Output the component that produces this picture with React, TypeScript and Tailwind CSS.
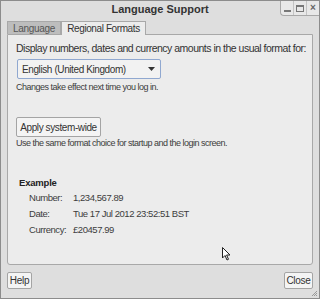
import React from 'react';

const font = { fontFamily: '"Liberation Sans", Arial, sans-serif' };

function Cursor() {
  return (
    <svg width="10" height="14" viewBox="0 0 10 14" className="absolute left-[221px] top-[246px]">
      <path d="M0.5 0.5 L0.5 11 L3 8.5 L5 13 L6.5 12.3 L4.6 8 L8 8 Z" fill="#fff" stroke="#222" strokeWidth="1" />
    </svg>
  );
}

function WindowButtons() {
  return (
    <div className="absolute right-0 top-0 flex h-[15px] border border-t-0 border-r-0 border-[#a8a8a8] rounded-bl-[4px] bg-[#e8e8e8]">
      <div className="w-[13px] flex items-end justify-center pb-[3px] border-r border-[#c4c4c4]">
        <div className="w-[7px] h-[2px] bg-[#777]" />
      </div>
      <div className="w-[13px] flex items-center justify-center border-r border-[#c4c4c4]">
        <div className="w-[8px] h-[7px] border border-[#777] border-t-2" />
      </div>
      <div className="w-[12px] flex items-center justify-center text-[10px] leading-none text-[#666] font-bold">×</div>
    </div>
  );
}

export default function App() {
  return (
    <div className="relative w-[320px] h-[299px] bg-[#dedede] border border-[#8c8c8c] text-[#3c3c3c] overflow-hidden whitespace-nowrap" style={font}>
      <div className="h-[16px] flex items-center justify-center text-[11px] font-bold text-[#333]">Language Support</div>
      <WindowButtons />
      <div className="px-[6px] pt-[3px]">
        <div className="flex items-end text-[10px] h-[14px]">
          <div className="h-[13px] w-[54px] flex items-center justify-center bg-[#bdbdbd] border border-b-0 border-[#a8a8a8] text-[#555] tracking-[-0.3px]">Language</div>
          <div className="h-[14px] w-[85px] flex items-center justify-center bg-[#ececec] border border-b-0 border-[#a8a8a8] text-[#333] -mb-px relative z-10 tracking-[-0.4px]">Regional Formats</div>
        </div>
        <div className="h-[231px] bg-[#ececec] border border-[#a8a8a8] rounded-b-[3px] px-[8px] pt-[6px]">
          <div className="text-[10.5px] leading-[14px] text-[#333] tracking-[-0.5px]">Display numbers, dates and currency amounts in the usual format for:</div>
          <div className="mt-[4px] ml-px w-[144px] h-[20px] bg-[#f2f2f2] border border-[#90a8d0] rounded-[2px] flex items-center justify-between pl-[4px] pr-[5px] text-[10px] text-[#333] tracking-[-0.4px]">
            <span>English (United Kingdom)</span>
            <svg width="7" height="4" viewBox="0 0 7 4"><path d="M0 0 H7 L3.5 4 Z" fill="#333" /></svg>
          </div>
          <div className="mt-[2px] text-[9px] leading-[12px] text-[#3c3c3c] tracking-[-0.5px]">Changes take effect next time you log in.</div>
          <div className="mt-[24px] w-[85px] h-[20px] bg-[#f4f4f4] border border-[#a4a4a4] rounded-[2px] flex items-center justify-center text-[10px] text-[#333] tracking-[-0.4px]">Apply system-wide</div>
          <div className="text-[9px] leading-[12px] text-[#3c3c3c] tracking-[-0.5px]">Use the same format choice for startup and the login screen.</div>
          <div className="mt-[27px] ml-[3px] text-[9.5px] font-bold text-[#222] leading-[14px] tracking-[-0.2px]">Example</div>
          <div className="ml-[13px] grid grid-cols-[44px_1fr] gap-y-[1px] text-[9.5px] leading-[15px] text-[#3c3c3c] tracking-[-0.45px]">
            <span>Number:</span><span>1,234,567.89</span>
            <span>Date:</span><span>Tue 17 Jul 2012 23:52:51 BST</span>
            <span>Currency:</span><span>£20457.99</span>
          </div>
        </div>
        <div className="flex justify-between mt-[7px]">
          <div className="h-[17px] w-[25px] bg-[#f4f4f4] border border-[#a4a4a4] rounded-[2px] flex items-center justify-center text-[10px] text-[#333] tracking-[-0.3px]">Help</div>
          <div className="h-[17px] w-[29px] bg-[#f4f4f4] border border-[#a4a4a4] rounded-[2px] flex items-center justify-center text-[10px] text-[#333] tracking-[-0.3px]">Close</div>
        </div>
      </div>
      <svg width="6" height="6" viewBox="0 0 6 6" className="absolute right-[1px] bottom-[1px]">
        <path d="M5 0 L0 5 M5 2 L2 5 M5 4 L4 5" stroke="#9a9a9a" strokeWidth="1" />
      </svg>
      <Cursor />
    </div>
  );
}
